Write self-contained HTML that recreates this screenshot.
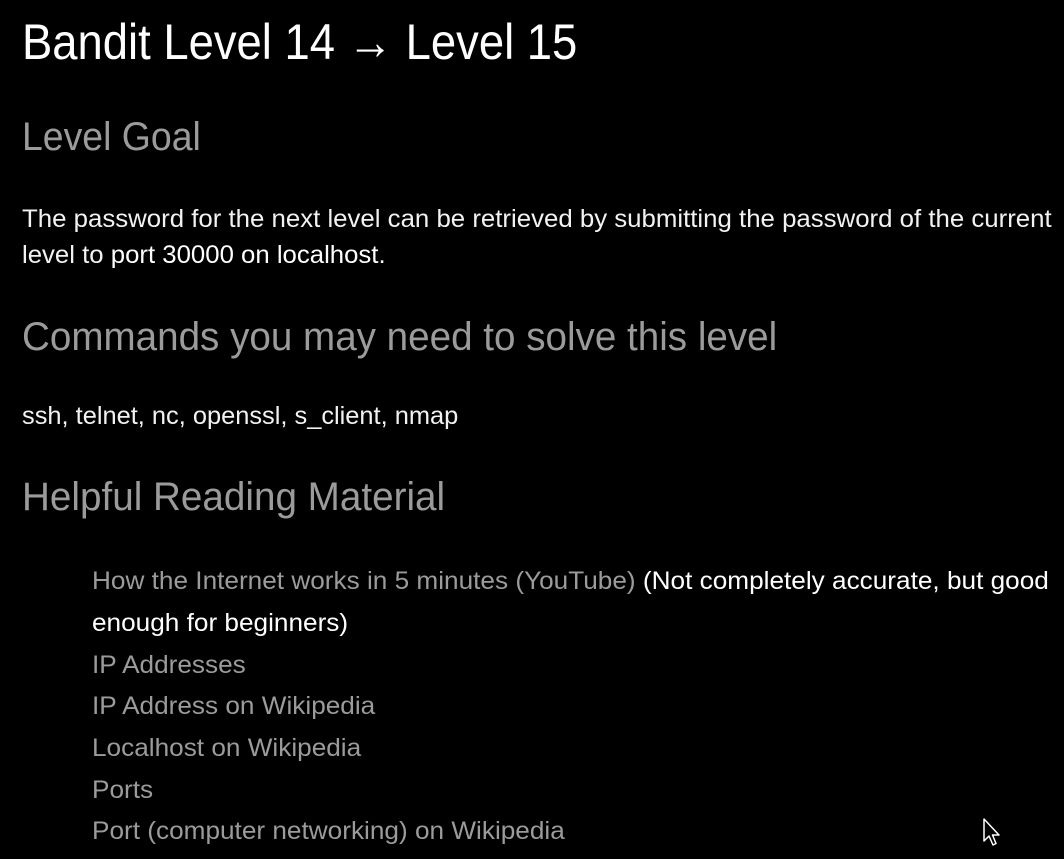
<!DOCTYPE html>
<html><head><meta charset="utf-8"><style>
html,body{margin:0;padding:0;background:#000;width:1064px;height:859px;overflow:hidden}
.t{position:absolute;left:22px;white-space:nowrap;line-height:1;font-family:"Liberation Sans",sans-serif;transform-origin:0 0}
.h1{font-size:50px;color:#fff;top:17px;transform:scaleX(.908)}
.h2{font-size:40px;color:#9b9b9b}
.p{font-size:25px;color:#f2f2f2}
.li{left:92px;font-size:25px;color:#9b9b9b;transform:scaleX(1.047)}
.w{color:#fff}
</style></head><body>
<div class="t h1">Bandit Level 14 → Level 15</div>
<div class="t h2" style="top:117px;transform:scaleX(.935)">Level Goal</div>
<div class="t p" style="top:207px;transform:scaleX(1.032)">The password for the next level can be retrieved by submitting the password of the current</div>
<div class="t p" style="top:243px;transform:scaleX(1.03)">level to <span class="w">port 30000 on localhost</span>.</div>
<div class="t h2" style="top:317px;transform:scaleX(.965)">Commands you may need to solve this level</div>
<div class="t p" style="top:404px;transform:scaleX(1.016)">ssh, telnet, nc, openssl, s_client, nmap</div>
<div class="t h2" style="top:477px;transform:scaleX(.966)">Helpful Reading Material</div>
<div class="t li" style="top:569px">How the Internet works in 5 minutes (YouTube) <span class="w">(Not completely accurate, but good</span></div>
<div class="t li w" style="top:611px;color:#fff">enough for beginners)</div>
<div class="t li" style="top:653px">IP Addresses</div>
<div class="t li" style="top:694px">IP Address on Wikipedia</div>
<div class="t li" style="top:736px">Localhost on Wikipedia</div>
<div class="t li" style="top:778px">Ports</div>
<div class="t li" style="top:819px">Port (computer networking) on Wikipedia</div>
<svg style="position:absolute;left:982px;top:818px" width="20" height="30" viewBox="0 0 20 30">
<path d="M2 1 L2 23 L7 18 L11 27 L14 25.5 L10.5 17 L17 17 Z" fill="#000" stroke="#fff" stroke-width="1.5" stroke-linejoin="round"/>
</svg>
</body></html>
